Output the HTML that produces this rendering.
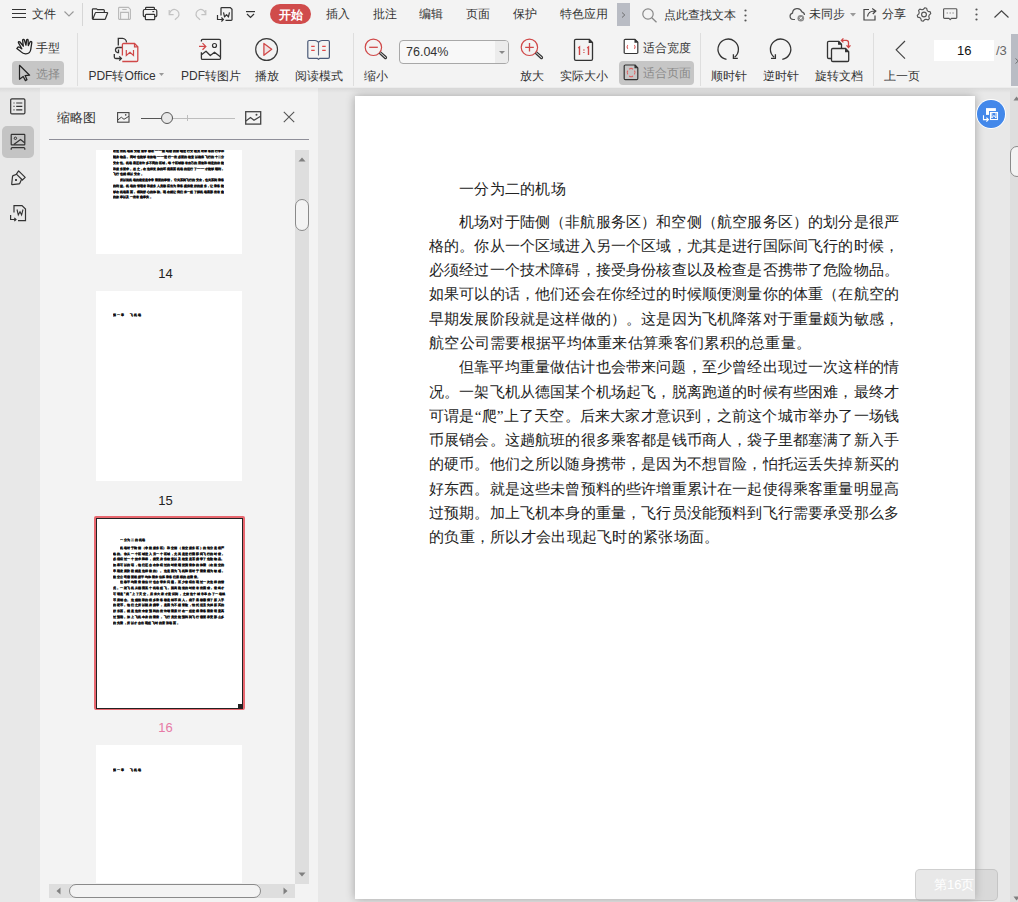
<!DOCTYPE html>
<html><head><meta charset="utf-8">
<style>
*{margin:0;padding:0;box-sizing:border-box}
html,body{width:1018px;height:902px;overflow:hidden;background:#f3f3f3;font-family:"Liberation Sans",sans-serif;color:#333}
.a{position:absolute}
.t{position:absolute;font-size:12px;line-height:14px;white-space:nowrap;color:#333}
svg{position:absolute;overflow:visible}
.sep{position:absolute;width:1px;background:#dcdcdc}
.tl{position:absolute;height:4px;opacity:.8;background:repeating-linear-gradient(90deg,#111 0 1px,#999 1px 2px,#222 2px 3.2px,#fff 3.2px 3.8px,#444 3.8px 4.6px,#fff 4.6px 5.9px)}
.tt{position:absolute;font-size:3.45px;line-height:4px;height:4px;font-weight:bold;-webkit-text-stroke:0.18px #111;color:#111;white-space:nowrap;overflow:hidden}
.tn{position:absolute;left:-2px;width:255px;text-align:center;font-size:13px;line-height:16px;color:#222}
.dl{position:absolute;left:429px;width:470px;font-family:"Liberation Serif",serif;font-size:15.2px;line-height:18px;color:#222;white-space:nowrap}
.dl.j{text-align:justify;text-align-last:justify;white-space:normal;height:18px;overflow:hidden}
</style></head><body>

<!-- ================= TOP BAR ================= -->
<div class="a" style="left:0;top:0;width:1018px;height:88px;background:#f3f3f3"></div>

<!-- hamburger -->
<svg style="left:12px;top:9px" width="14" height="10" viewBox="0 0 14 10"><path d="M0 0.5H14M0 4.5H14M0 8.5H14" stroke="#333" stroke-width="1.1" fill="none"/></svg>
<div class="t" style="left:32px;top:7px;font-size:12px">文件</div>
<svg style="left:64px;top:11px" width="10" height="6" viewBox="0 0 10 6"><path d="M0.5 0.5L5 5L9.5 0.5" stroke="#999" stroke-width="1.1" fill="none"/></svg>
<div class="sep" style="left:82px;top:3px;height:23px;background:#d6d6d6"></div>

<!-- folder open -->
<svg style="left:88px;top:4px" width="72" height="22" viewBox="0 0 72 22"><path d="M4.4 15V5.6A0.8 0.8 0 0 1 5.2 4.8H8.6L9.4 5.6H15.5A0.8 0.8 0 0 1 16.3 6.4V8.4" stroke="#333" stroke-width="1.2" fill="none" stroke-linejoin="round"/><path d="M4.8 15.3L7.3 8.9A0.6 0.6 0 0 1 7.9 8.5H19.2A0.4 0.4 0 0 1 19.6 9L17.4 14.8A0.7 0.7 0 0 1 16.7 15.3Z" stroke="#333" stroke-width="1.2" fill="none" stroke-linejoin="round"/><path d="M30.6 15V4.2A0.8 0.8 0 0 1 31.4 3.4H40.4L42.4 5.4V14.6A0.8 0.8 0 0 1 41.6 15.4H31.4A0.8 0.8 0 0 1 30.6 14.6" stroke="#b8b8b8" stroke-width="1.1" fill="none"/><path d="M34.3 5.5H38.7" stroke="#b8b8b8" stroke-width="1.1"/><path d="M32.6 15.3V8.4H40.5V15.3" stroke="#b8b8b8" stroke-width="1.1" fill="none"/><path d="M57.6 5.5V4.2A0.8 0.8 0 0 1 58.4 3.4H65.6A0.8 0.8 0 0 1 66.4 4.2V5.5" stroke="#333" stroke-width="1.2" fill="none"/><path d="M57.3 12.6H56.6A1.3 1.3 0 0 1 55.3 11.3V6.9A1.4 1.4 0 0 1 56.7 5.5H67.4A1.4 1.4 0 0 1 68.8 6.9V11.3A1.3 1.3 0 0 1 67.5 12.6H66.8" stroke="#333" stroke-width="1.2" fill="none"/><path d="M57.4 15V11.1A0.7 0.7 0 0 1 58.1 10.4H66A0.7 0.7 0 0 1 66.7 11.1V15A0.6 0.6 0 0 1 66.1 15.6H58A0.6 0.6 0 0 1 57.4 15Z" stroke="#333" stroke-width="1.2" fill="none"/><path d="M64.4 7.6H66.2" stroke="#333" stroke-width="1.1"/></svg>
<!-- undo / redo disabled -->
<svg style="left:164px;top:4px" width="72" height="22" viewBox="0 0 72 22"><path d="M5.6 9.6A4.7 4.7 0 1 1 14.3 12.6L10.9 15.8" stroke="#c2c2c2" stroke-width="1.2" fill="none"/><path d="M5.2 6V10.6H9.6" stroke="#c2c2c2" stroke-width="1.2" fill="none"/><path d="M41.4 9.6A4.7 4.7 0 1 0 32.7 12.6L36.1 15.8" stroke="#c2c2c2" stroke-width="1.2" fill="none"/><path d="M41.8 6V10.6H37.4" stroke="#c2c2c2" stroke-width="1.2" fill="none"/><path d="M57 11.5V4.3A0.8 0.8 0 0 1 57.8 3.5H66.3L68 5.2V15.5A0.8 0.8 0 0 1 67.2 16.3H61.5" stroke="#333" stroke-width="1.25" fill="none"/><path d="M59.5 8.3L60.6 13L62.5 10.6L64.4 13L65.5 8.3" stroke="#333" stroke-width="1.2" fill="none" stroke-linejoin="round"/><path d="M53.5 11V15.5H59.3M57.4 13.5L59.4 15.5L57.4 17.5" stroke="#333" stroke-width="1.2" fill="none"/></svg>
<!-- dropdown -->
<svg style="left:246px;top:11px" width="9" height="8" viewBox="0 0 9 8"><path d="M0 0.6H9" stroke="#333" stroke-width="1.2"/><path d="M1 3L4.5 6.5L8 3" stroke="#333" stroke-width="1.2" fill="none"/></svg>
<!-- start pill -->
<div class="a" style="left:270px;top:4px;width:41px;height:20px;border-radius:10px;background:#d04b4b"></div>
<div class="t" style="left:278.5px;top:8px;color:#fff;font-weight:bold;font-size:12px">开始</div>
<div class="t" style="left:326px;top:7px">插入</div>
<div class="t" style="left:373px;top:7px">批注</div>
<div class="t" style="left:419px;top:7px">编辑</div>
<div class="t" style="left:466px;top:7px">页面</div>
<div class="t" style="left:513px;top:7px">保护</div>
<div class="t" style="left:560px;top:7px">特色应用</div>
<div class="a" style="left:617px;top:3px;width:13px;height:23px;background:#b9bcc4"></div>
<svg style="left:621px;top:12px" width="5" height="6" viewBox="0 0 5 6"><path d="M1 0.5L3.8 3L1 5.5" stroke="#666" stroke-width="0.9" fill="none"/></svg>
<!-- search -->
<svg style="left:642px;top:8px" width="16" height="15" viewBox="0 0 16 15"><circle cx="6" cy="6" r="5.2" stroke="#888" stroke-width="1.2" fill="none"/><path d="M9.8 9.8L14.5 14.3" stroke="#888" stroke-width="1.3"/></svg>
<div class="t" style="left:664px;top:8px">点此查找文本</div>
<svg style="left:744px;top:9px" width="3" height="13" viewBox="0 0 3 13"><circle cx="1.5" cy="1.5" r="1.1" fill="#555"/><circle cx="1.5" cy="6.5" r="1.1" fill="#555"/><circle cx="1.5" cy="11.5" r="1.1" fill="#555"/></svg>
<!-- cloud -->
<svg style="left:789px;top:7px" width="18" height="15" viewBox="0 0 18 15"><path d="M6 12.5H4A3.2 3.2 0 0 1 3.5 6.2A4.8 4.8 0 0 1 12.8 4.8A3.4 3.4 0 0 1 15.5 8" stroke="#555" stroke-width="1.2" fill="none"/><circle cx="11.8" cy="11.2" r="3.3" fill="#8a8a8a"/><path d="M10.5 9.9L13.1 12.5M13.1 9.9L10.5 12.5" stroke="#fff" stroke-width="0.9"/></svg>
<div class="t" style="left:809px;top:7px">未同步</div>
<svg style="left:850px;top:13px" width="6" height="4" viewBox="0 0 6 4"><path d="M0 0H6L3 3.5Z" fill="#999"/></svg>
<!-- share -->
<svg style="left:863px;top:7px" width="15" height="14" viewBox="0 0 15 14"><path d="M6 2.5H1V13H12V8.5" stroke="#444" stroke-width="1.2" fill="none"/><path d="M4.5 9.5C5 6 7.5 4 11.5 4M9.2 1.5L12.8 4L9.8 7" stroke="#444" stroke-width="1.2" fill="none"/></svg>
<div class="t" style="left:882px;top:7px">分享</div>
<!-- gear -->
<svg style="left:916px;top:6.5px" width="16" height="15" viewBox="0 0 16 15"><path d="M8.89 0.76 L10.60 1.22 L11.17 3.37 L12.13 4.33 L14.28 4.90 L14.74 6.61 L13.16 8.18 L12.80 9.49 L13.39 11.64 L12.14 12.89 L9.99 12.30 L8.68 12.66 L7.11 14.24 L5.40 13.78 L4.83 11.63 L3.87 10.67 L1.72 10.10 L1.26 8.39 L2.84 6.82 L3.20 5.51 L2.61 3.36 L3.86 2.11 L6.01 2.70 L7.32 2.34Z" stroke="#555" stroke-width="1.15" fill="none" stroke-linejoin="round"/><circle cx="8" cy="7.5" r="2.4" stroke="#555" stroke-width="1.15" fill="none"/></svg>
<!-- chat -->
<svg style="left:943px;top:8px" width="15" height="13" viewBox="0 0 15 13"><path d="M1.5 0.7H12.9A0.9 0.9 0 0 1 13.8 1.6V9.4A0.9 0.9 0 0 1 12.9 10.3H8.4L7.2 11.6L6 10.3H1.5A0.9 0.9 0 0 1 0.6 9.4V1.6A0.9 0.9 0 0 1 1.5 0.7Z" stroke="#555" stroke-width="1.15" fill="none" stroke-linejoin="round"/><path d="M3.6 5H5M6.5 5H7.9M9.4 5H10.8" stroke="#888" stroke-width="1.2"/></svg>
<svg style="left:975px;top:8px" width="3" height="13" viewBox="0 0 3 13"><circle cx="1.5" cy="1.5" r="1.1" fill="#555"/><circle cx="1.5" cy="6.5" r="1.1" fill="#555"/><circle cx="1.5" cy="11.5" r="1.1" fill="#555"/></svg>
<svg style="left:994px;top:10px" width="15" height="8" viewBox="0 0 15 8"><path d="M0.5 7.5L7.5 0.8L14.5 7.5" stroke="#444" stroke-width="1.2" fill="none"/></svg>
<!-- end topbar -->

<!-- ================= TOOLBAR ================= -->

<!-- hand -->
<svg style="left:0;top:34px" width="36" height="50" viewBox="0 0 36 50"><path d="M16.8 14.6L18.2 12.8C19.3 12.7 20.5 13.8 21.8 14.8L18.4 8.6C18.2 7.6 19.3 7.3 20 8L23.3 12.2L22.6 6.2C22.6 5.3 23.8 5 24.3 5.8L26 11.2L26.6 6C26.9 5.2 28 5.3 28.1 6.1L28.3 11.6L30.2 7.8C30.8 7.2 31.9 7.6 31.8 8.5L30.8 15.2C30.5 17.8 28.7 19.6 25.8 19.8C23.8 19.9 22.2 19 20.8 17.6Z" stroke="#222" stroke-width="1.3" fill="none" stroke-linejoin="round"/></svg>
<div class="t" style="left:36px;top:41px">手型</div>
<!-- select button -->
<div class="a" style="left:12px;top:61px;width:52px;height:24px;border-radius:4px;background:#c6c6c6"></div>
<svg style="left:0;top:34px" width="36" height="50" viewBox="0 0 36 50"><path d="M19.5 31.3V45.3L23.2 42.5L25.4 46.6L27 45.8L25.1 41.6L29.6 41.2Z" stroke="#222" stroke-width="1.2" fill="none" stroke-linejoin="round"/></svg>
<div class="t" style="left:36px;top:67px;color:#8a8a8a">选择</div>
<div class="sep" style="left:77px;top:33px;height:53px;background:#dedede"></div>

<!-- PDF to Office -->
<svg style="left:108px;top:34px" width="36" height="32" viewBox="0 0 36 32"><path d="M10.3 11.5V4.3H14.5A4.2 4.2 0 0 1 18.5 8.5" stroke="#333" stroke-width="1.3" fill="none"/><path d="M14 13.5H9.5A2.6 2.6 0 0 0 9.5 18.6H10.5V15.5" stroke="#333" stroke-width="1.3" fill="none"/><path d="M6.3 20V23A1.5 1.5 0 0 0 7.8 24.5H13.3M11.3 22.4L13.4 24.5L11.3 26.6" stroke="#333" stroke-width="1.3" fill="none"/><path d="M14.4 21.5V10.8A1.2 1.2 0 0 1 15.6 9.5H26.5L29.8 12.8V26.3A1.2 1.2 0 0 1 28.6 27.5H14.3" stroke="#d04848" stroke-width="1.3" fill="none"/><path d="M26.5 9.5V12.8H29.8" stroke="#d04848" stroke-width="1.2" fill="none"/><path d="M18.3 16V21.5L22 18.3L25.5 21.5V16" stroke="#d04848" stroke-width="1.2" fill="none"/></svg>
<div class="t" style="left:82px;top:69px;width:80px;text-align:center">PDF转Office</div>
<svg style="left:159px;top:73px" width="5" height="3" viewBox="0 0 5 3"><path d="M0 0H5L2.5 3Z" fill="#999"/></svg>
<!-- PDF to image -->
<svg style="left:194px;top:34px" width="36" height="32" viewBox="0 0 36 32"><path d="M7.4 7.6V6.6A1.2 1.2 0 0 1 8.6 5.4H25.3A1.2 1.2 0 0 1 26.5 6.6V24.2A1.2 1.2 0 0 1 25.3 25.4H8.6A1.2 1.2 0 0 1 7.4 24.2V18.3" stroke="#333" stroke-width="1.3" fill="none"/><path d="M7.8 20.5L12 17.3L16.3 21.5L20.5 18.2L26.3 22.8" stroke="#333" stroke-width="1.3" fill="none" stroke-linejoin="round"/><circle cx="20.5" cy="11.5" r="2" stroke="#333" stroke-width="1.2" fill="none"/><path d="M5 12.4H12M8.5 9.1L11.8 12.4L8.5 15.7" stroke="#d04848" stroke-width="1.3" fill="none"/></svg>
<div class="t" style="left:171px;top:69px;width:80px;text-align:center">PDF转图片</div>
<!-- play -->
<svg style="left:250px;top:34px" width="36" height="32" viewBox="0 0 36 32"><circle cx="16.6" cy="15.5" r="10.9" stroke="#3a3a3a" stroke-width="1.2" fill="none"/><path d="M13.9 9.4L21.7 15.3L13.9 21.3Z" stroke="#d04848" stroke-width="1.3" fill="#f0e2e2" stroke-linejoin="round"/></svg>
<div class="t" style="left:227px;top:69px;width:80px;text-align:center">播放</div>
<!-- read mode -->
<svg style="left:300px;top:34px" width="36" height="32" viewBox="0 0 36 32"><path d="M18.5 8.4C17.5 7.2 16.5 6.5 15 6.5H9.2A1.4 1.4 0 0 0 7.8 7.9V23A1.3 1.3 0 0 0 9.1 24.3H17.2L18.5 25.3L19.8 24.3H28.1A1.3 1.3 0 0 0 29.4 23V7.9A1.4 1.4 0 0 0 28 6.5H22C20.5 6.5 19.5 7.2 18.5 8.4Z" stroke="#4b5a78" stroke-width="1.2" fill="none" stroke-linejoin="round"/><path d="M18.5 8.6V21.5" stroke="#5a6580" stroke-width="1.1"/><path d="M11.2 12.4H14.7M11.2 16.4H14.7M22.2 12.4H25.7M22.2 16.4H25.7" stroke="#e04848" stroke-width="1.2"/></svg>
<div class="t" style="left:279px;top:69px;width:80px;text-align:center">阅读模式</div>
<div class="sep" style="left:353px;top:33px;height:53px;background:#dedede"></div>
<!-- zoom out -->
<svg style="left:358px;top:34px" width="36" height="32" viewBox="0 0 36 32"><circle cx="15.4" cy="13.3" r="8.2" stroke="#d04848" stroke-width="1.2" fill="none"/><path d="M11.2 13.3H19.8" stroke="#d04848" stroke-width="1.3"/><path d="M21.3 19.2L26.7 24.3A1 1 0 0 0 28.2 22.8L22.6 17.9" stroke="#333" stroke-width="1.2" fill="none"/></svg>
<div class="t" style="left:336px;top:69px;width:80px;text-align:center">缩小</div>
<!-- zoom combo -->
<div class="a" style="left:399px;top:40px;width:110px;height:24px;border:1px solid #a8a8a8;border-radius:4px;background:#f8f8f8;overflow:hidden"><div class="a" style="right:0;top:0;width:13px;height:22px;background:#ececec"></div></div>
<div class="t" style="left:406px;top:45px;font-size:12.5px;line-height:14px">76.04%</div>
<svg style="left:499px;top:51px" width="6" height="3" viewBox="0 0 6 3"><path d="M0 0H6L3 3Z" fill="#888"/></svg>
<!-- zoom in -->
<svg style="left:514px;top:34px" width="36" height="32" viewBox="0 0 36 32"><circle cx="15.4" cy="13.3" r="8.2" stroke="#d04848" stroke-width="1.2" fill="none"/><path d="M11.2 13.3H19.8M15.5 9V17.6" stroke="#d04848" stroke-width="1.3"/><path d="M21.3 19.2L26.7 24.3A1 1 0 0 0 28.2 22.8L22.6 17.9" stroke="#333" stroke-width="1.2" fill="none"/></svg>
<div class="t" style="left:492px;top:69px;width:80px;text-align:center">放大</div>
<!-- 1:1 -->
<svg style="left:566px;top:34px" width="36" height="32" viewBox="0 0 36 32"><path d="M23.3 5.3H9.8A1.3 1.3 0 0 0 8.5 6.6V25A1.3 1.3 0 0 0 9.8 26.3H25.2A1.3 1.3 0 0 0 26.5 25V8.5Z" stroke="#333" stroke-width="1.3" fill="none" stroke-linejoin="round"/><path d="M23.3 5.3V8.5H26.5" stroke="#333" stroke-width="1.2" fill="#333"/><path d="M12.2 14L13.5 13V21M21.2 14L22.5 13V21" stroke="#d04848" stroke-width="1.4" fill="none"/><path d="M17.9 15.6V16.4M17.9 18.2V19" stroke="#d04848" stroke-width="1.6"/></svg>
<div class="t" style="left:544px;top:69px;width:80px;text-align:center">实际大小</div>
<!-- fit width -->
<svg style="left:618px;top:34px" width="24" height="50" viewBox="0 0 24 50"><path d="M17 5.3H7.3A1.1 1.1 0 0 0 6.2 6.4V18.4A1.1 1.1 0 0 0 7.3 19.5H18.7A1.1 1.1 0 0 0 19.8 18.4V8.1Z" stroke="#333" stroke-width="1.2" fill="#fff" stroke-linejoin="round"/><path d="M17 5.3V8.1H19.8" stroke="#333" stroke-width="1.1" fill="#333"/><path d="M9.8 11A3 3 0 0 0 9.8 14.8M16.4 11A3 3 0 0 1 16.4 14.8" stroke="#e06060" stroke-width="1.1" fill="none"/></svg>
<div class="t" style="left:643px;top:41px">适合宽度</div>
<div class="a" style="left:619px;top:61px;width:75px;height:24px;border-radius:4px;background:#c6c6c6"></div>
<svg style="left:618px;top:34px" width="24" height="50" viewBox="0 0 24 50"><path d="M17 31H7.3A1.1 1.1 0 0 0 6.2 32.1V44.6A1.1 1.1 0 0 0 7.3 45.7H18.7A1.1 1.1 0 0 0 19.8 44.6V33.8Z" stroke="#333" stroke-width="1.2" fill="none" stroke-linejoin="round"/><path d="M17 31V33.8H19.8" stroke="#333" stroke-width="1.1" fill="#333"/><path d="M9.8 36.6A3 3 0 0 0 9.8 40.4M16.4 36.6A3 3 0 0 1 16.4 40.4M11.2 35.2A3 3 0 0 1 15 35.2M11.2 42A3 3 0 0 0 15 42" stroke="#e06060" stroke-width="1.1" fill="none"/></svg>
<div class="t" style="left:643px;top:66px;color:#8a8a8a">适合页面</div>
<div class="sep" style="left:700px;top:33px;height:53px;background:#dedede"></div>
<!-- clockwise -->
<svg style="left:712px;top:34px" width="36" height="32" viewBox="0 0 36 32"><path d="M14.5 25.3A10.2 10.2 0 1 1 22.6 23.2" stroke="#333" stroke-width="1.3" fill="none"/><path d="M21.4 20.2V24.3H25.8" stroke="#333" stroke-width="1.3" fill="none"/></svg>
<div class="t" style="left:689px;top:69px;width:80px;text-align:center">顺时针</div>
<svg style="left:764px;top:34px" width="36" height="32" viewBox="0 0 36 32"><path d="M18.3 25.3A10.2 10.2 0 1 0 10.2 23.2" stroke="#333" stroke-width="1.3" fill="none"/><path d="M11.4 20.2V24.3H7" stroke="#333" stroke-width="1.3" fill="none"/></svg>
<div class="t" style="left:741px;top:69px;width:80px;text-align:center">逆时针</div>
<!-- rotate doc -->
<svg style="left:820px;top:34px" width="36" height="32" viewBox="0 0 36 32"><path d="M11.5 24.5H8.8A1.3 1.3 0 0 1 7.5 23.2V8.6A1.3 1.3 0 0 1 8.8 7.3H18.6L21.5 10.2V14.5" stroke="#333" stroke-width="1.3" fill="none" stroke-linejoin="round"/><path d="M18.6 7.3V10.2H21.5" stroke="#333" stroke-width="1.1" fill="#333"/><path d="M25.6 14.5H12.8A1.3 1.3 0 0 0 11.5 15.8V26.2A1.3 1.3 0 0 0 12.8 27.5H27.4A1.3 1.3 0 0 0 28.7 26.2V17.6Z" stroke="#333" stroke-width="1.3" fill="none" stroke-linejoin="round"/><path d="M25.6 14.5V17.6H28.7" stroke="#333" stroke-width="1.1" fill="#333"/><path d="M21.5 6.4H26.3A2.2 2.2 0 0 1 28.5 8.6V13.5M23.4 4.4L21.4 6.4L23.4 8.4M26.5 11.4L28.5 13.5L30.5 11.4" stroke="#d04848" stroke-width="1.3" fill="none"/></svg>
<div class="t" style="left:799px;top:69px;width:80px;text-align:center">旋转文档</div>
<div class="sep" style="left:873px;top:33px;height:53px;background:#dedede"></div>
<!-- prev page -->
<svg style="left:895px;top:40px" width="11" height="20" viewBox="0 0 11 20"><path d="M10 1L1.2 9.8L10 18.6" stroke="#444" stroke-width="1.2" fill="none"/></svg>
<div class="t" style="left:862px;top:69px;width:80px;text-align:center">上一页</div>
<div class="a" style="left:934px;top:40px;width:60px;height:21px;background:#fff"></div>
<div class="t" style="left:957px;top:44px;font-size:13px;color:#111">16</div>
<div class="t" style="left:996px;top:44px;font-size:13px;color:#666">/3</div>
<div class="a" style="left:1011px;top:34px;width:7px;height:52px;background:#b9bcc4"></div>
<svg style="left:1015px;top:58px" width="4" height="6" viewBox="0 0 4 6"><path d="M0.5 0.5L3.3 3L0.5 5.5" stroke="#666" stroke-width="0.9" fill="none"/></svg>
<!-- end toolbar -->
<div class="a" style="left:0;top:87px;width:1018px;height:1px;background:#ececec"></div>

<!-- ================= LEFT RAIL ================= -->
<div class="a" style="left:0;top:88px;width:40px;height:814px;background:#e8e8e8"></div>
<svg style="left:10px;top:98px" width="16" height="17" viewBox="0 0 16 17"><rect x="0.7" y="0.9" width="14.2" height="15" rx="1.2" stroke="#333" stroke-width="1.2" fill="none"/><path d="M3.5 5H4.5M3.5 8.4H4.5M3.5 11.8H4.5" stroke="#333" stroke-width="1.2"/><path d="M6.2 5H12.3M6.2 8.4H12.3M6.2 11.8H12.3" stroke="#333" stroke-width="1.2"/></svg>
<div class="a" style="left:2px;top:126px;width:32px;height:32px;border-radius:5px;background:#c4c4c4"></div>
<svg style="left:0;top:126px" width="36" height="100" viewBox="0 0 36 100"><rect x="11.2" y="8.3" width="13.6" height="10.5" rx="0.6" stroke="#333" stroke-width="1.2" fill="none"/><path d="M13.8 18.6L20.5 13.5L24.6 16.8" stroke="#333" stroke-width="1.2" fill="none"/><circle cx="15.4" cy="12.3" r="1.2" stroke="#333" stroke-width="1" fill="none"/><path d="M11.2 23.8V22.6A1 1 0 0 1 12.2 21.6H23.8A1 1 0 0 1 24.8 22.6V23.8" stroke="#333" stroke-width="1.2" fill="none"/><path d="M18.6 44.9L25.2 51.4L22.4 54L16.4 48.1Z" stroke="#333" stroke-width="1.2" fill="none" stroke-linejoin="round"/><path d="M16.6 48.2L13.2 49.6A1.2 1.2 0 0 0 12.5 50.5L11.7 58.2A0.5 0.5 0 0 0 12.2 58.7L19 57.9A1 1 0 0 0 19.8 57.3L21.6 53.3" stroke="#333" stroke-width="1.2" fill="none" stroke-linejoin="round"/><rect x="15" y="53" width="2" height="2" fill="#444"/></svg>
<svg style="left:9px;top:204px" width="18" height="18" viewBox="0 0 18 18"><path d="M5 8.5V1.6H13L16.5 5V16.6H9" stroke="#333" stroke-width="1.2" fill="none"/><path d="M8 5.5L9.3 11L11 7.7L12.6 11L14 5.5" stroke="#333" stroke-width="1.1" fill="none"/><path d="M1.6 11V15.5H7M5.3 13.8L7 15.5L5.3 17.2" stroke="#333" stroke-width="1.2" fill="none"/></svg>

<!-- ================= THUMB PANEL ================= -->
<div class="a" style="left:40px;top:88px;width:278px;height:814px;background:#f3f3f3"></div>
<div class="t" style="left:57px;top:110px;font-size:13px;line-height:16px">缩略图</div>
<svg style="left:117px;top:112px" width="13" height="11" viewBox="0 0 13 11"><rect x="0.6" y="0.6" width="11.4" height="9.6" stroke="#444" stroke-width="1.1" fill="none"/><path d="M0.8 8L4.3 5.2L7 7.3L11.9 4.3" stroke="#444" stroke-width="1" fill="none"/><circle cx="8.7" cy="2.9" r="0.8" fill="#444"/></svg>
<div class="a" style="left:141px;top:118px;width:21px;height:1px;background:#555"></div>
<div class="a" style="left:172px;top:118px;width:63px;height:1px;background:#bdbdbd"></div>
<div class="a" style="left:187px;top:115px;width:1px;height:6px;background:#bdbdbd"></div>
<div class="a" style="left:161px;top:112px;width:12px;height:12px;border-radius:50%;border:1px solid #555;background:#e8e8e8"></div>
<svg style="left:245px;top:111px" width="17" height="14" viewBox="0 0 17 14"><rect x="0.7" y="0.7" width="15" height="12.4" stroke="#444" stroke-width="1.3" fill="none"/><path d="M0.9 10L5.5 6.5L9 9.2L15.6 5.2" stroke="#444" stroke-width="1.2" fill="none"/><circle cx="11.5" cy="3.7" r="1" fill="#444"/></svg>
<svg style="left:283px;top:111px" width="12" height="12" viewBox="0 0 12 12"><path d="M0.8 0.8L11.2 11.2M11.2 0.8L0.8 11.2" stroke="#555" stroke-width="1.1"/></svg>
<div class="a" style="left:49px;top:139px;width:260px;height:1px;background:#8f8f99"></div>

<!-- thumbnails -->
<div class="a" style="left:40px;top:150px;width:255px;height:733px;overflow:hidden">
  <div class="a" style="left:56px;top:-86px;width:146px;height:190px;background:#fff"></div>
  <div class="tt" style="left:73px;top:-1.0px;letter-spacing:0.47px">在这些机场里安检通常都在——航站楼的前端进行安检员对乘客的行李和</div>
  <div class="tt" style="left:73px;top:4.8px;letter-spacing:0.36px">随身物品，同时也能够有效地——进行一些必要的检查以确保飞行的十二分</div>
  <div class="tt" style="left:73px;top:10.7px;letter-spacing:0.26px">安全性。机场里还有许多不同的区域，每个区域都有自己的用途和特定的功能</div>
  <div class="tt" style="left:73px;top:16.6px;letter-spacing:0.36px">和服务要求。总之，在这样复杂的环境里面机场的运行了——才能够顺利，</div>
  <div class="tt" style="left:73px;top:21.8px;letter-spacing:0.44px">飞行也就得以安全。</div>
  <div class="tt" style="left:80px;top:27.7px;letter-spacing:0.15px">所以说机场的建设是非常重要的事情，它关系到飞行的安全，也关系到乘客</div>
  <div class="tt" style="left:73px;top:33.6px;letter-spacing:0.36px">的利益。机场的管理者和服务人员都应当为乘客提供最好的服务，让乘客能</div>
  <div class="tt" style="left:73px;top:39.5px;letter-spacing:0.36px">够在机场里面，得到舒心的体验。现在就让我们来一起了解机场里那些有趣</div>
  <div class="tt" style="left:73px;top:45.0px;letter-spacing:0.33px">的故事以及一些有趣事实。</div>
  <div class="tn" style="top:116px">14</div>
  <div class="a" style="left:56px;top:141px;width:146px;height:190px;background:#fff"></div>
  <div class="tt" style="left:73px;top:163px;letter-spacing:1.14px">第一章　飞机场</div>
  <div class="tn" style="top:343px">15</div>
  <div class="a" style="left:54px;top:366px;width:151px;height:194px;border:2px solid #e8676f;border-radius:2px"></div>
  <div class="a" style="left:56px;top:368px;width:147px;height:191px;border:1px solid #222;background:#fff"></div>
  <div class="a" style="left:198px;top:554px;width:5px;height:5px;background:#222"></div>
  <div class="tt" style="left:80px;top:388px;letter-spacing:0.71px">一分为二的机场</div>
  <div class="tt" style="left:80px;top:395.8px;letter-spacing:0.62px">机场对于陆侧（非航服务区）和空侧（航空服务区）的划分是很严</div>
  <div class="tt" style="left:73px;top:401.6px;letter-spacing:0.61px">格的。你从一个区域进入另一个区域，尤其是进行国际间飞行的时候，</div>
  <div class="tt" style="left:73px;top:407.3px;letter-spacing:0.61px">必须经过一个技术障碍，接受身份核查以及检查是否携带了危险物品。</div>
  <div class="tt" style="left:73px;top:413.1px;letter-spacing:0.61px">如果可以的话，他们还会在你经过的时候顺便测量你的体重（在航空的</div>
  <div class="tt" style="left:73px;top:418.8px;letter-spacing:0.61px">早期发展阶段就是这样做的）。这是因为飞机降落对于重量颇为敏感，</div>
  <div class="tt" style="left:73px;top:424.6px;letter-spacing:0.52px">航空公司需要根据平均体重来估算乘客们累积的总重量。</div>
  <div class="tt" style="left:80px;top:430.4px;letter-spacing:0.62px">但靠平均重量做估计也会带来问题，至少曾经出现过一次这样的情</div>
  <div class="tt" style="left:73px;top:436.1px;letter-spacing:0.61px">况。一架飞机从德国某个机场起飞，脱离跑道的时候有些困难，最终才</div>
  <div class="tt" style="left:73px;top:441.9px;letter-spacing:0.61px">可谓是“爬”上了天空。后来大家才意识到，之前这个城市举办了一场钱</div>
  <div class="tt" style="left:73px;top:447.6px;letter-spacing:0.61px">币展销会。这趟航班的很多乘客都是钱币商人，袋子里都塞满了新入手</div>
  <div class="tt" style="left:73px;top:453.4px;letter-spacing:0.61px">的硬币。他们之所以随身携带，是因为不想冒险，怕托运丢失掉新买的</div>
  <div class="tt" style="left:73px;top:459.2px;letter-spacing:0.61px">好东西。就是这些未曾预料的些许增重累计在一起使得乘客重量明显高</div>
  <div class="tt" style="left:73px;top:464.9px;letter-spacing:0.61px">过预期。加上飞机本身的重量，飞行员没能预料到飞行需要承受那么多</div>
  <div class="tt" style="left:73px;top:470.7px;letter-spacing:0.53px">的负重，所以才会出现起飞时的紧张场面。</div>
  <div class="tn" style="top:570px;color:#e77aa6">16</div>
  <div class="a" style="left:56px;top:595px;width:146px;height:190px;background:#fff"></div>
  <div class="tt" style="left:73px;top:617.5px;letter-spacing:1.14px">第一章　飞机场</div>
</div>
<!-- v scrollbar -->
<div class="a" style="left:295px;top:150px;width:14px;height:734px;background:#dedede"></div>
<svg style="left:298px;top:157px" width="8" height="5" viewBox="0 0 8 5"><path d="M0.5 4.5H7.5L4 0.5Z" fill="#808080"/></svg>
<svg style="left:298px;top:872px" width="8" height="5" viewBox="0 0 8 5"><path d="M0.5 0.5H7.5L4 4.5Z" fill="#808080"/></svg>
<div class="a" style="left:295px;top:199px;width:14px;height:32px;border-radius:7px;border:1px solid #8a8a8a;background:#f3f3f3"></div>
<!-- h scrollbar -->
<div class="a" style="left:49px;top:884px;width:246px;height:14px;background:#dedede"></div>
<svg style="left:56px;top:887px" width="5" height="8" viewBox="0 0 5 8"><path d="M4.5 0.5V7.5L0.5 4Z" fill="#808080"/></svg>
<svg style="left:283px;top:887px" width="5" height="8" viewBox="0 0 5 8"><path d="M0.5 0.5V7.5L4.5 4Z" fill="#808080"/></svg>
<div class="a" style="left:69px;top:884px;width:192px;height:14px;border-radius:7px;border:1px solid #8a8a8a;background:#f3f3f3"></div>

<!-- ================= DOC AREA ================= -->
<div class="a" style="left:318px;top:88px;width:692px;height:814px;background:#e8e8e8;overflow:hidden">
  <div class="a" style="left:37px;top:8px;width:620px;height:803px;background:#fff;box-shadow:0 0 9px rgba(0,0,0,0.3)"></div>
</div>
<div class="doc">
<div class="dl" style="left:459px;top:180.0px;letter-spacing:0.25px">一分为二的机场</div>
<div class="dl j" style="left:459px;width:440px;top:212.5px">机场对于陆侧（非航服务区）和空侧（航空服务区）的划分是很严</div>
<div class="dl j" style="top:236.8px">格的。你从一个区域进入另一个区域，尤其是进行国际间飞行的时候，</div>
<div class="dl j" style="top:261.1px">必须经过一个技术障碍，接受身份核查以及检查是否携带了危险物品。</div>
<div class="dl j" style="top:285.3px">如果可以的话，他们还会在你经过的时候顺便测量你的体重（在航空的</div>
<div class="dl j" style="top:309.6px">早期发展阶段就是这样做的）。这是因为飞机降落对于重量颇为敏感，</div>
<div class="dl" style="top:333.9px;letter-spacing:0.29px">航空公司需要根据平均体重来估算乘客们累积的总重量。</div>
<div class="dl j" style="left:459px;width:440px;top:358.2px">但靠平均重量做估计也会带来问题，至少曾经出现过一次这样的情</div>
<div class="dl j" style="top:382.5px">况。一架飞机从德国某个机场起飞，脱离跑道的时候有些困难，最终才</div>
<div class="dl j" style="top:406.7px">可谓是“爬”上了天空。后来大家才意识到，之前这个城市举办了一场钱</div>
<div class="dl j" style="top:431.0px">币展销会。这趟航班的很多乘客都是钱币商人，袋子里都塞满了新入手</div>
<div class="dl j" style="top:455.3px">的硬币。他们之所以随身携带，是因为不想冒险，怕托运丢失掉新买的</div>
<div class="dl j" style="top:479.6px">好东西。就是这些未曾预料的些许增重累计在一起使得乘客重量明显高</div>
<div class="dl j" style="top:503.9px">过预期。加上飞机本身的重量，飞行员没能预料到飞行需要承受那么多</div>
<div class="dl" style="top:528.1px;letter-spacing:0.29px">的负重，所以才会出现起飞时的紧张场面。</div>
</div>

<div class="a" style="left:0;top:88px;width:1018px;height:5px;background:linear-gradient(rgba(0,0,0,0.06),rgba(0,0,0,0))"></div>
<!-- blue float button -->
<div class="a" style="left:975.5px;top:98.5px;width:30.5px;height:30.5px;border-radius:50%;background:#fff"></div>
<div class="a" style="left:977px;top:100px;width:27.5px;height:27.5px;border-radius:50%;background:#4388ea"></div>
<svg style="left:976px;top:98px" width="31" height="31" viewBox="0 0 31 31"><rect x="10" y="10.1" width="9.9" height="6.8" fill="#fff"/><rect x="13" y="13" width="10" height="10" fill="#4388ea"/><rect x="14.5" y="14.5" width="7" height="7" stroke="#fff" stroke-width="1.1" fill="none"/><path d="M15.8 15V20L17.9 17.4L20 20V15" stroke="#fff" stroke-width="1" fill="none"/><path d="M7.5 17.3V21.6H12.4M10.4 19.6L12.4 21.6L10.4 23.6" stroke="#fff" stroke-width="1.15" fill="none"/></svg>

<!-- right scrollbar -->
<div class="a" style="left:1010px;top:88px;width:8px;height:814px;background:#dedede"></div>
<svg style="left:1013px;top:96px" width="6" height="5" viewBox="0 0 6 5"><path d="M0.5 4.5H7L3.5 0.5Z" fill="#808080"/></svg>
<div class="a" style="left:1010px;top:146px;width:14px;height:31px;border-radius:7px;border:1px solid #8a8a8a;background:#f3f3f3"></div>
<svg style="left:1013px;top:896px" width="6" height="5" viewBox="0 0 6 5"><path d="M0.5 0.5H7L3.5 4.5Z" fill="#808080"/></svg>

<!-- page tooltip -->
<div class="a" style="left:915px;top:869px;width:83px;height:32px;border-radius:5px;background:rgba(190,190,190,0.35);border:1px solid rgba(160,160,160,0.35)"></div>
<div class="t" style="left:934px;top:877px;font-size:13px;line-height:16px;color:#fff">第16页</div>

</body></html>
